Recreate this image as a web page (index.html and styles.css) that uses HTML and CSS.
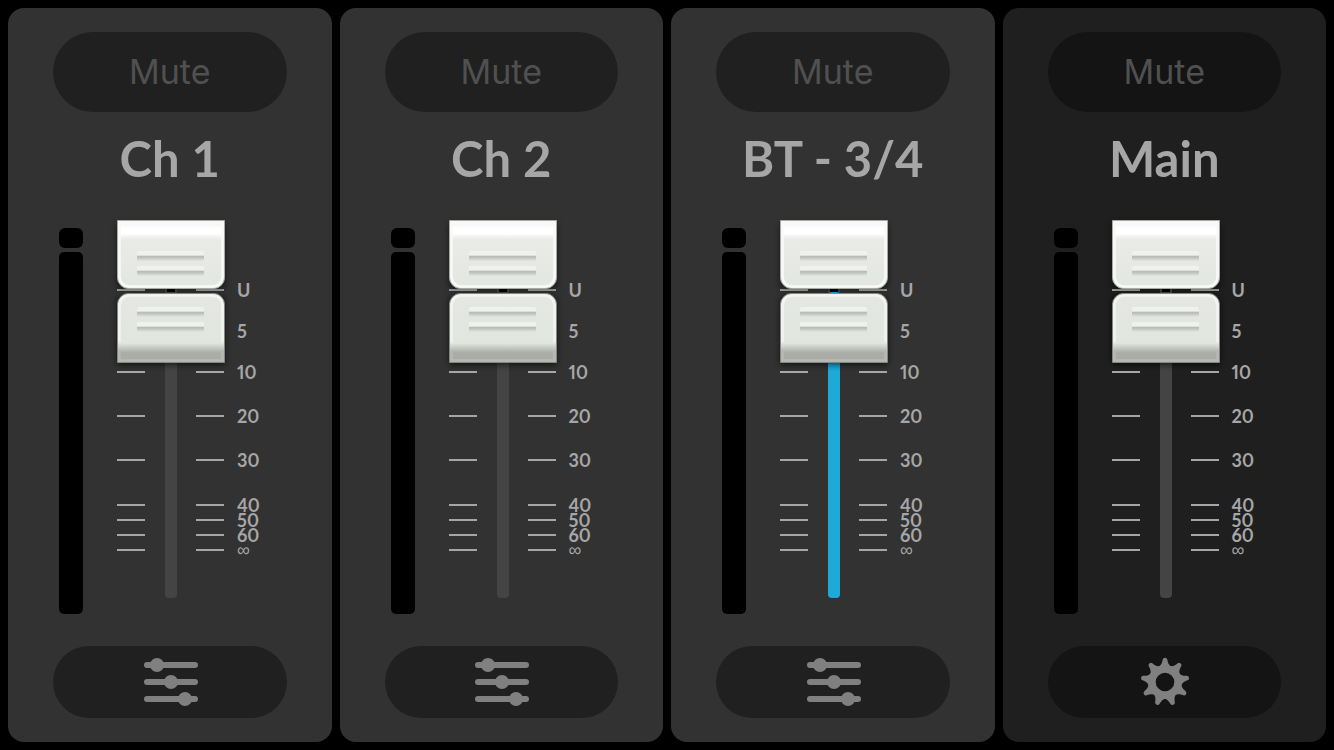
FILE: index.html
```html
<!DOCTYPE html>
<html lang="en">
<head>
  <meta charset="UTF-8">
  <title>Mixer</title>
  <link rel="stylesheet" href="styles.css">
</head>
<body>
  <svg width="0" height="0" class="symbols">
    <symbol id="sliders" viewBox="0 0 56 48">
      <path d="M5 7H53M5 24H53M5 41H53" fill="none" stroke="currentColor" stroke-width="6" stroke-linecap="round"/>
      <g fill="currentColor">
        <circle cx="15" cy="7" r="7"/>
        <circle cx="29" cy="24" r="7"/>
        <circle cx="43" cy="41" r="7"/>
      </g>
    </symbol>
    <symbol id="gear" viewBox="-26 -25 50 50">
      <defs>
        <path id="tooth" d="M-6.5 -14C-4.5 -17 -3 -18 -2.3 -22.5Q-2 -24.3 0 -24.3Q2 -24.3 2.3 -22.5C3 -18 4.5 -17 6.5 -14Z"/>
      </defs>
      <circle r="13.2" fill="none" stroke="currentColor" stroke-width="7.8"/>
      <g fill="currentColor">
        <use href="#tooth"/>
        <use href="#tooth" transform="rotate(40)"/>
        <use href="#tooth" transform="rotate(80)"/>
        <use href="#tooth" transform="rotate(120)"/>
        <use href="#tooth" transform="rotate(160)"/>
        <use href="#tooth" transform="rotate(200)"/>
        <use href="#tooth" transform="rotate(240)"/>
        <use href="#tooth" transform="rotate(280)"/>
        <use href="#tooth" transform="rotate(320)"/>
      </g>
    </symbol>
  </svg>

  <main class="mixer">
    <section class="strip">
      <button class="button mute">Mute</button>
      <h2 class="name"><label for="ch1">Ch 1</label></h2>
      <div class="levels">
        <div class="meter"><div class="clip"></div><div class="bar"></div></div>
        <div class="fader">
          <ul class="scale">
            <li><span>U</span></li><li><span>5</span></li><li><span>10</span></li>
            <li><span>20</span></li><li><span>30</span></li><li><span>40</span></li>
            <li><span>50</span></li><li><span>60</span></li><li><span class="off">∞</span></li>
          </ul>
          <div class="track"></div>
          <input type="range" id="ch1" min="-90" max="0" value="0">
        </div>
      </div>
      <button class="button settings" aria-label="Ch 1 settings"><svg width="56" height="48"><use href="#sliders"/></svg></button>
    </section>

    <section class="strip">
      <button class="button mute">Mute</button>
      <h2 class="name"><label for="ch2">Ch 2</label></h2>
      <div class="levels">
        <div class="meter"><div class="clip"></div><div class="bar"></div></div>
        <div class="fader">
          <ul class="scale">
            <li><span>U</span></li><li><span>5</span></li><li><span>10</span></li>
            <li><span>20</span></li><li><span>30</span></li><li><span>40</span></li>
            <li><span>50</span></li><li><span>60</span></li><li><span class="off">∞</span></li>
          </ul>
          <div class="track"></div>
          <input type="range" id="ch2" min="-90" max="0" value="0">
        </div>
      </div>
      <button class="button settings" aria-label="Ch 2 settings"><svg width="56" height="48"><use href="#sliders"/></svg></button>
    </section>

    <section class="strip">
      <button class="button mute">Mute</button>
      <h2 class="name"><label for="bt">BT - 3/4</label></h2>
      <div class="levels">
        <div class="meter"><div class="clip"></div><div class="bar"></div></div>
        <div class="fader">
          <ul class="scale">
            <li><span>U</span></li><li><span>5</span></li><li><span>10</span></li>
            <li><span>20</span></li><li><span>30</span></li><li><span>40</span></li>
            <li><span>50</span></li><li><span>60</span></li><li><span class="off">∞</span></li>
          </ul>
          <div class="track"><div class="fill" style="height: 82.7%"></div></div>
          <input type="range" id="bt" min="-90" max="0" value="0">
        </div>
      </div>
      <button class="button settings" aria-label="BT settings"><svg width="56" height="48"><use href="#sliders"/></svg></button>
    </section>

    <section class="strip main">
      <button class="button mute">Mute</button>
      <h2 class="name"><label for="main">Main</label></h2>
      <div class="levels">
        <div class="meter"><div class="clip"></div><div class="bar"></div></div>
        <div class="fader">
          <ul class="scale">
            <li><span>U</span></li><li><span>5</span></li><li><span>10</span></li>
            <li><span>20</span></li><li><span>30</span></li><li><span>40</span></li>
            <li><span>50</span></li><li><span>60</span></li><li><span class="off">∞</span></li>
          </ul>
          <div class="track"></div>
          <input type="range" id="main" min="-90" max="0" value="0">
        </div>
      </div>
      <button class="button settings" aria-label="Main settings"><svg width="50" height="50"><use href="#gear"/></svg></button>
    </section>
  </main>
</body>
</html>
```
FILE: styles.css
```css
* {
  box-sizing: border-box;
}
body {
  margin: 0;
  background: #000;
  color: #a6a6a6;
  font-family: Lato, "Liberation Sans", sans-serif;
}
.symbols {
  position: absolute;
}
.mixer {
  display: flex;
  gap: 8px;
  min-height: 100vh;
  padding: 8px;
}
.strip {
  flex: 1;
  display: flex;
  flex-direction: column;
  padding: 24px 45px;
  border-radius: 16px;
  background: #323232;
}
.strip.main {
  background: #1f1f1f;
}
.button {
  display: flex;
  align-items: center;
  justify-content: center;
  padding: 0;
  border: 0;
  border-radius: 40px;
  background: #202020;
  color: #808080;
}
.main .button {
  background: #141414;
}
.main .mute,
.mute {
  height: 80px;
  padding-bottom: 2px;
  color: #505050;
  font: 400 34px Inter, "Liberation Sans", sans-serif;
}
.settings {
  height: 72px;
}
.name {
  margin: 16px 0 40px;
  font-size: 49px;
  line-height: 60px;
  font-weight: 700;
  text-align: center;
  white-space: nowrap;
}

/* meter + fader */
.levels {
  flex: 1;
  display: flex;
  gap: 34px;
  margin-bottom: 32px;
  padding-left: 6px;
}
.meter {
  display: flex;
  flex-direction: column;
  gap: 4px;
  width: 24px;
}
.clip {
  height: 20px;
  border-radius: 6px;
  background: #000;
}
.bar {
  flex: 1;
  border-radius: 5px;
  background: #000;
}
.fader {
  display: grid;
  grid-template-columns: 108px 1fr;
}
.scale {
  grid-area: 1 / 1 / 2 / 3;
  display: grid;
  grid-template-rows: 41fr 41fr 44fr 44fr 45fr 15fr 15fr 15fr 15fr;
  margin: 0;
  padding: 55px 0 56px;
  list-style: none;
  font-size: 18px;
  font-weight: 700;
  line-height: 14px;
}
.scale li {
  display: flex;
  align-items: center;
  height: 14px;
}
.scale li::before,
.scale li::after {
  content: "";
  width: 28px;
  height: 2px;
  background: #a6a6a6;
}
.scale li::before {
  margin-right: 51px;
}
.scale span {
  order: 1;
  margin-left: 13px;
  font-variant-numeric: proportional-nums;
}
.scale .off {
  font-family: "Liberation Sans", sans-serif;
  font-weight: 400;
}
.track {
  grid-area: 1 / 1;
  justify-self: center;
  display: flex;
  align-items: flex-end;
  width: 12px;
  margin-bottom: 16px;
  border-radius: 4px;
  background: #444;
}
.fill {
  width: 100%;
  border-radius: 4px;
  background: #1ea9d9;
}

/* the thumb is 132x160, the cap inside it is 108x144, the rest is shadow */
input[type=range] {
  grid-area: 1 / 1;
  z-index: 1;
  appearance: none;
  writing-mode: vertical-lr;
  direction: rtl;
  width: 132px;
  height: auto;
  margin: -17px -12px -16px;
  background: none;
}
input[type=range]::-webkit-slider-thumb {
  appearance: none;
  width: 132px;
  height: 160px;
  background: url("data:image/svg+xml,%3Csvg xmlns='http://www.w3.org/2000/svg' width='132' height='160'%3E%3Cdefs%3E%3ClinearGradient id='a' x2='0' y2='1'%3E%3Cstop stop-color='%23f0f0ee'/%3E%3Cstop offset='.12' stop-color='%23fff'/%3E%3Cstop offset='.19' stop-color='%23fff'/%3E%3Cstop offset='.28' stop-color='%23e9ebe6'/%3E%3Cstop offset='1' stop-color='%23e3e7e1'/%3E%3C/linearGradient%3E%3ClinearGradient id='b' x2='0' y2='1'%3E%3Cstop stop-color='%23e5e7e2'/%3E%3Cstop offset='.72' stop-color='%23e1e6df'/%3E%3Cstop offset='.86' stop-color='%23a9aca7'/%3E%3Cstop offset='1' stop-color='%23a9aca7'/%3E%3C/linearGradient%3E%3ClinearGradient id='e' x2='0' y2='1'%3E%3Cstop stop-color='%23f4f5f2'/%3E%3Cstop offset='.7' stop-color='%23f1f3f0'/%3E%3Cstop offset='.85' stop-color='%23b7b9b5'/%3E%3C/linearGradient%3E%3ClinearGradient id='c' x2='0' y2='1'%3E%3Cstop stop-color='%23f0f2ee'/%3E%3Cstop offset='.4' stop-color='%23eff1ed'/%3E%3Cstop offset='.55' stop-color='%23b9bcb7'/%3E%3Cstop offset='.7' stop-color='%23c3c6c1'/%3E%3Cstop offset='1' stop-color='%23e3e7e1'/%3E%3C/linearGradient%3E%3Cfilter id='s' x='-20%25' y='-20%25' width='140%25' height='140%25'%3E%3CfeGaussianBlur stdDeviation='3'/%3E%3C/filter%3E%3C/defs%3E%3Crect x='12' y='12' width='108' height='66' rx='3' opacity='.5' filter='url(%23s)'/%3E%3Crect x='12' y='86' width='108' height='68' rx='3' opacity='.6' filter='url(%23s)'/%3E%3Cpath d='M62 77h8v4h-8z'/%3E%3Cpath d='M12.500 9.500h107v57a11 11 0 0 1-11 11h-85a11 11 0 0 1-11-11z' fill='url(%23a)' stroke='%23a9aaa7'/%3E%3Cpath d='M14.500 11.500h103v54a10 10 0 0 1-10 10h-83a10 10 0 0 1-10-10z' fill='none' stroke='%23f9faf8' stroke-width='2.500'/%3E%3Cpath d='M12.500 151.500h107v-58a11 11 0 0 0-11-11h-85a11 11 0 0 0-11 11z' fill='url(%23b)' stroke='%23858784'/%3E%3Cpath d='M14.500 149.500h103v-55a10 10 0 0 0-10-10h-83a10 10 0 0 0-10 10z' fill='none' stroke='url(%23e)' stroke-width='2.500'/%3E%3Cg fill='url(%23c)'%3E%3Crect x='32' y='40' width='67' height='10' rx='2'/%3E%3Crect x='32' y='55' width='67' height='10' rx='2'/%3E%3Crect x='32' y='96' width='67' height='10' rx='2'/%3E%3Crect x='32' y='111' width='67' height='10' rx='2'/%3E%3C/g%3E%3C/svg%3E") no-repeat;
}
```
